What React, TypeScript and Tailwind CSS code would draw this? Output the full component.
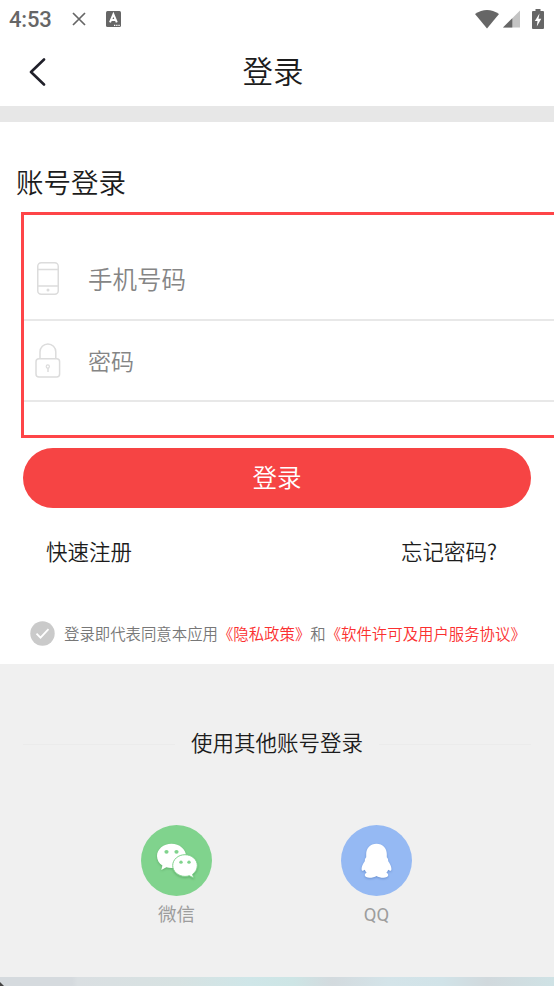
import type { ReactNode } from 'react';

const StatusBar = () => (
  <div className="flex h-[38px] items-center pr-[10px] pl-[9px] text-[#666]">
    <span className="w-[63px] pt-[2px] font-['Roboto'] text-[22px] leading-none font-medium tracking-[-0.2px]">4:53</span>
    <svg width="14" height="14" viewBox="0 0 14 14" fill="none" stroke="currentColor" strokeWidth="1.7">
      <path d="M1 1l12 12M13 1L1 13" />
    </svg>
    <svg className="ml-5" width="15" height="16" viewBox="0 0 15 16">
      <rect width="15" height="16" rx="1.5" fill="#666" />
      <path d="M4 11.4L7.4 3.4l3.4 8M5.2 9h4.4" fill="none" stroke="#fff" strokeWidth="2" />
      <path d="M8 14.3h1.3M10.2 14.3h1.3M12.4 14.3h1.3" stroke="#fff" strokeWidth="1.3" />
    </svg>
    <div className="ml-auto flex items-center">
      <svg width="24" height="19" viewBox="0 0 24 19">
        <path d="M0 4Q12-4 24 4L12 18.5z" fill="#666" />
      </svg>
      <svg className="ml-1" width="17" height="18" viewBox="0 0 17 18">
        <path d="M0 17.5L17 .5v17z" fill="#c4c4c4" />
        <path d="M0 17.5L9.3 8.2v9.3z" fill="#666" />
      </svg>
      <svg className="ml-3" width="12" height="20" viewBox="0 0 12 20">
        <path d="M3.5 0h5v2H11a1 1 0 0 1 1 1v16a1 1 0 0 1-1 1H1a1 1 0 0 1-1-1V3a1 1 0 0 1 1-1h2.5z" fill="#666" />
        <path d="M7.5 4.5L2.8 12h2.7L4.8 17.5 9.3 9.8H6.5z" fill="#fff" />
      </svg>
    </div>
  </div>
);

const PhoneIcon = () => (
  <svg className="ml-[3px]" width="22" height="33" viewBox="0 0 22 33" fill="none" stroke="#dcdcdc" strokeWidth="1.5">
    <rect x=".75" y=".75" width="20.5" height="31.5" rx="3.5" />
    <path d="M1 7.5h20M1 24h20" />
    <circle cx="11" cy="28" r="1.5" fill="#dcdcdc" stroke="none" />
  </svg>
);

const LockIcon = () => (
  <svg className="ml-px" width="26" height="35" viewBox="0 0 26 35" fill="none" stroke="#dcdcdc" strokeWidth="1.5">
    <rect x="1" y="15.7" width="23.6" height="18.3" rx="3" />
    <path d="M5 15.5V9a7.9 8 0 0 1 15.8 0v6.5" />
    <circle cx="12.8" cy="23.5" r="1.6" strokeWidth="1.2" />
    <path d="M13 25v4" />
  </svg>
);

const WechatIcon = () => (
  <svg width="71" height="71" viewBox="0 0 71 71">
    <circle cx="35.5" cy="35.5" r="35.5" fill="#80d38d" />
    <g className="drop-shadow-[0_1px_1px_rgba(40,110,50,0.35)]">
      <path d="M30.5 18.7c-8 0-14.5 5.5-14.5 12.3 0 3.9 2 7.3 5.4 9.6L20.3 45l5-2.7c1.6.5 3.4.8 5.2.8 8 0 14.5-5.4 14.5-12.1s-6.5-12.3-14.5-12.3z" fill="#fff" />
      <ellipse cx="25.5" cy="26.8" rx="2.1" ry="1.9" fill="#80d38d" />
      <ellipse cx="35.5" cy="26.8" rx="2.1" ry="1.9" fill="#80d38d" />
      <path d="M44 29.7c-6.800 0-12.300 4.800-12.300 10.800S37.200 51.400 44 51.400c1.500 0 3-.2 4.300-.7l4.300 2.300-1-3.800c2.900-2 4.700-5.100 4.700-8.700 0-6-5.500-10.800-12.300-10.800z" fill="#fff" stroke="#80d38d" strokeWidth="1" />
      <ellipse cx="40" cy="37.2" rx="1.7" ry="1.6" fill="#80d38d" />
      <ellipse cx="48" cy="37.2" rx="1.7" ry="1.6" fill="#80d38d" />
    </g>
  </svg>
);

const QQIcon = () => (
  <svg width="71" height="71" viewBox="0 0 71 71">
    <circle cx="35.5" cy="35.5" r="35.5" fill="#95b9f3" />
    <path
      className="drop-shadow-[0_1px_1px_rgba(50,90,160,0.4)]"
      d="M35.5 18.8c-6.2 0-10.3 4.6-10.3 10.2v3.2c-1.2 1.2-1.5 2.2-1.3 3.8-2 2.7-3.6 6-3.3 8.5.2 1.8 1.3 1.5 3.2.3.3 1 .9 2 1.8 2.9-1.3.6-1.8 1.5-1.8 2.6 0 3.2 8.3 2.9 11.7.6 3.4 2.3 11.7 2.6 11.7-.6 0-1.1-.5-2-1.8-2.6.9-.9 1.5-1.9 1.8-2.9 1.9 1.2 3 1.5 3.200-.3.3-2.5-1.3-5.8-3.3-8.5.2-1.600-.1-2.600-1.300-3.800V29c0-5.600-4.100-10.200-10.300-10.200z"
      fill="#fff"
    />
  </svg>
);

interface FieldProps {
  icon: ReactNode;
  placeholder: string;
  type: string;
  className: string;
}

const Field = ({ icon, placeholder, type, className }: FieldProps) => (
  <label className="flex items-center border-b-2 border-[#e8e8e8] pl-[10px]">
    <span className="flex w-[54px] justify-start">{icon}</span>
    <input
      type={type}
      placeholder={placeholder}
      className={`h-full min-w-0 flex-1 bg-transparent text-[#555] outline-none placeholder:text-[#858585] ${className}`}
    />
  </label>
);

interface SocialButtonProps {
  icon: ReactNode;
  label: string;
}

const SocialButton = ({ icon, label }: SocialButtonProps) => (
  <button className="flex w-[71px] flex-col items-center">
    {icon}
    <span className="mt-[5px] pl-px text-[18.5px] leading-[28px] font-normal text-[#9d9d9d]">{label}</span>
  </button>
);

export default function App() {
  return (
    <div className="flex h-[986px] w-[554px] flex-col overflow-hidden bg-white font-['Roboto','Noto_Sans_CJK_SC',sans-serif] font-[350] text-[#1c1c1c]">
      <StatusBar />
      <header className="grid h-[68px] grid-cols-[60px_1fr_60px] items-center">
        <button className="pb-px pl-[29px]">
          <svg width="17" height="28" viewBox="0 0 17 28" fill="none" stroke="#20202a" strokeWidth="2.6" strokeLinecap="round" strokeLinejoin="round">
            <path d="M15 1.5L2 14l13 12.5" />
          </svg>
        </button>
        <h1 className="pt-px pr-[8px] text-center text-[30.5px] leading-[40px] font-[350]">登录</h1>
      </header>
      <div className="h-4 bg-[#e7e7e7]" />

      <main className="flex h-[542px] flex-col">
        <h2 className="mt-[42px] h-[48px] pl-4 text-[27.5px] leading-[40px] font-[350]">账号登录</h2>
        <form className="ml-[21px] grid h-[226px] shrink-0 grid-rows-[106px_81px] border-y-3 border-l-3 border-[#fe4548]">
          <div className="grid pt-[23px]">
            <Field icon={<PhoneIcon />} placeholder="手机号码" type="tel" className="pt-[3px] text-[24.5px]" />
          </div>
          <Field icon={<LockIcon />} placeholder="密码" type="password" className="pt-[3px] text-[23px]" />
        </form>
        <button className="mx-[23px] mt-[10px] h-[60px] shrink-0 rounded-full bg-[#f64444] pt-[2px] text-[24.5px] text-white">登录</button>
        <div className="mt-[27px] flex h-8 justify-between pr-[57px] pl-[46px] font-['Noto_Sans_CJK_SC',sans-serif] text-[21.5px] leading-8">
          <a>快速注册</a>
          <a>忘记密码?</a>
        </div>
        <div className="mt-[54px] flex h-[24px] items-center pl-[30px] whitespace-nowrap">
          <svg width="25" height="25" viewBox="0 0 25 25">
            <circle cx="12.5" cy="12.5" r="12.2" fill="#cacaca" />
            <path d="M6.5 12.7l4 4 8-8.5" fill="none" stroke="#fff" strokeWidth="1.8" />
          </svg>
          <p className="ml-[9px] font-['Noto_Sans_CJK_SC',sans-serif] text-[15.4px] leading-6 text-[#777]">
            登录即代表同意本应用<a className="text-[#fb3030]">《隐私政策》</a>和<a className="text-[#fb3030]">《软件许可及用户服务协议》</a>
          </p>
        </div>
      </main>

      <footer className="h-[313px] bg-[#f0f0f0] pt-[64px]">
        <div className="flex h-8 items-center gap-4 px-[23px] text-[21.5px]">
          <span className="h-px flex-1 bg-[#ebebeb]" />
          <span className="pt-px">使用其他账号登录</span>
          <span className="h-px flex-1 bg-[#ebebeb]" />
        </div>
        <div className="mt-[65px] flex justify-center gap-[129px] pr-[2px]">
          <SocialButton icon={<WechatIcon />} label="微信" />
          <SocialButton icon={<QQIcon />} label="QQ" />
        </div>
      </footer>
      <div className="h-[9px] bg-[linear-gradient(90deg,#d5dade_0%,#d5dade_13%,#dadfe2_14%,#d7e2e2_32%,#cfe6e8_45%,#cde5e5_53%,#d3dade_60%,#d4e4e9_70%,#d1e3e8_80%,#d1d9dd_88%,#cfe2e5_100%)]">
        <svg width="5" height="9" viewBox="0 0 5 9">
          <path d="M0 5l4 4H0z" fill="#444" />
        </svg>
      </div>
    </div>
  );
}
